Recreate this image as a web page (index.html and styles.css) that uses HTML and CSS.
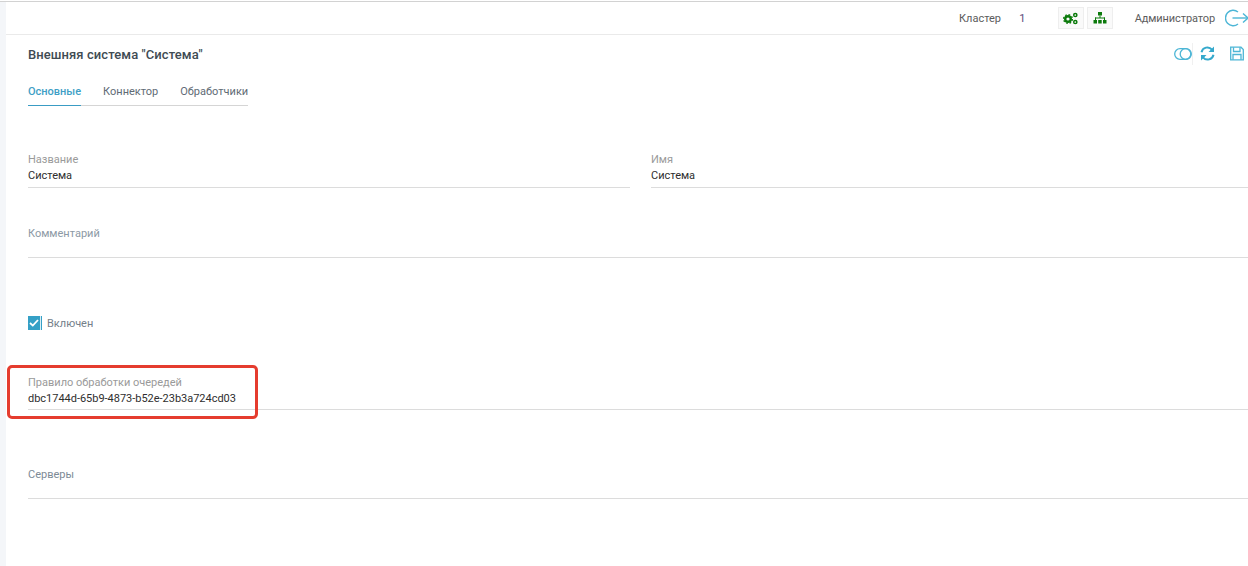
FILE: index.html
```html
<!DOCTYPE html>
<html lang="ru">
<head>
<meta charset="utf-8">
<title>Внешняя система</title>
<link rel="stylesheet" href="styles.css">
</head>
<body>
<div class="app">
  <aside class="rail"></aside>
  <div class="main">
    <header class="topbar">
      <span class="cluster-label">Кластер</span>
      <span class="cluster-value">1</span>
      <div class="tool-buttons">
        <button class="tool-btn" type="button" aria-label="Настройки">
          <svg width="15" height="13" viewBox="0 0 15 13"><g fill="none" stroke="#0b7a0b"><circle cx="5" cy="7" r="2.8" stroke-width="2.4"/><circle cx="5" cy="7" r="4.4" stroke-width="1.3" stroke-dasharray="1.7 1.75"/></g><g fill="none" stroke="#0b7a0b" stroke-width="1.5"><circle cx="12.3" cy="3" r="1.6"/><circle cx="12.3" cy="10" r="1.6"/></g></svg>
        </button>
        <button class="tool-btn" type="button" aria-label="Структура">
          <svg width="14" height="12" viewBox="0 0 14 12"><g fill="#0b7a0b"><rect x="5" y="0" width="4" height="3.5"/><rect x="6.5" y="3.5" width="1" height="2.5"/><rect x="2" y="5.5" width="10" height="1"/><rect x="2" y="5.5" width="1" height="2.5"/><rect x="11" y="5.5" width="1" height="2.5"/><rect x="0.5" y="8" width="3.5" height="3.5"/><rect x="5.2" y="8" width="3.5" height="3.5"/><rect x="10" y="8" width="3.5" height="3.5"/></g></svg>
        </button>
      </div>
      <span class="user">Администратор</span>
      <svg class="logout" width="23" height="18" viewBox="0 0 23 18"><g fill="none" stroke="#4db6d6" stroke-width="1.4"><path d="M13 3A7.7 7.7 0 1 0 13 15"/><path d="M7.5 9H23"/><path d="M18 4.5L23 9L18 13.5"/></g></svg>
    </header>
    <section class="content">
      <div class="title-row">
        <h1 class="title">Внешняя система "Система"</h1>
        <div class="actions">
          <svg class="toggle" width="18" height="12" viewBox="0 0 18 12"><g fill="none" stroke="#4db6d6" stroke-width="1.3"><rect x="0.7" y="0.7" width="16.6" height="10.6" rx="5.3"/><circle cx="11.5" cy="6" r="5.3"/></g></svg>
          <span class="divider"></span>
          <svg class="refresh" width="15" height="15" viewBox="0 0 15 15"><g fill="none" stroke="#35a9cc" stroke-width="2"><path d="M1.5 6.2A6 6 0 0 1 12 3.6"/><path d="M13.5 8.8A6 6 0 0 1 3 11.4"/></g><path fill="#35a9cc" d="M14 0.5V6H8.5zM1 14.5V9H6.5z"/></svg>
          <svg class="save" width="14" height="15" viewBox="0 0 14 15"><g fill="none" stroke="#4db6d6" stroke-width="1.3"><path d="M0.7 1.2H11L13.3 3.5V13.8H0.7z"/><path d="M3.5 1.2V5.5H10V1.2"/><path d="M3 13.8V8.5H11V13.8"/></g></svg>
        </div>
      </div>
      <nav class="tabs">
        <a class="tab tab-active">Основные</a>
        <a class="tab">Коннектор</a>
        <a class="tab">Обработчики</a>
      </nav>
      <div class="form">
        <div class="row-two">
          <div class="field field-top">
            <label class="field-label">Название</label>
            <div class="field-value">Система</div>
          </div>
          <div class="field field-top">
            <label class="field-label">Имя</label>
            <div class="field-value">Система</div>
          </div>
        </div>
        <div class="field field-comment">
          <label class="field-label">Комментарий</label>
          <div class="field-value"></div>
        </div>
        <label class="check">
          <span class="check-box"><svg width="10" height="8" viewBox="0 0 10 8"><path d="M1 4L3.8 6.6L9 1" fill="none" stroke="#fff" stroke-width="1.8"/></svg></span>
          <span class="check-text">Включен</span>
        </label>
        <div class="field field-rule">
          <label class="field-label">Правило обработки очередей</label>
          <div class="field-value">dbc1744d-65b9-4873-b52e-23b3a724cd03</div>
        </div>
        <div class="field field-servers">
          <label class="field-label">Серверы</label>
          <div class="field-value"></div>
        </div>
      </div>
    </section>
  </div>
</div>
<div class="highlight"></div>
</body>
</html>
```
FILE: styles.css
```css
* { box-sizing: border-box; }
html, body { margin: 0; height: 100%; overflow: hidden; background: #fff; }
body { font-family: Roboto, "Liberation Sans", sans-serif; font-size: 11px; color: #2e2e2e; }
.app { display: flex; height: 565px; border-top: 1px solid #d2d2d2; margin-top: 1px; }
.rail { width: 6px; flex: none; background: #f4f6f9; }
.main { flex: 1; min-width: 0; overflow: hidden; }
.topbar { height: 33px; border-bottom: 1px solid #eaeaea; display: flex; align-items: center; white-space: nowrap; }
.cluster-label { margin-left: 953px; color: #5c5c5c; width: 61px; }
.cluster-value { color: #5b4a7a; width: 39px; }
.tool-buttons { display: flex; gap: 3px; }
.tool-btn { width: 26px; height: 22px; padding: 0; border: 1px solid #eee; background: #fafafa; display: flex; align-items: center; justify-content: center; }
.user { margin-left: 22px; color: #5c5c5c; letter-spacing: -0.1px; }
.logout { margin-left: 10px; flex: none; }
.content { padding: 0 0 0 22px; }
.title-row { display: flex; justify-content: space-between; align-items: center; height: 38px; }
.title { margin: 0; font-size: 13px; font-weight: 500; color: #404b53; letter-spacing: 0.08px; }
.actions { display: flex; align-items: center; width: 74px; flex: none; height: 22px; margin-top: -1px; }
.toggle { flex: none; }
.divider { flex: none; width: 1px; height: 22px; background: #f0f0f0; }
.refresh { flex: none; margin-left: 7px; }
.save { flex: none; margin-left: 15px; }
.tabs { display: inline-flex; gap: 22px; border-bottom: 1px solid #d5d5d5; height: 33px; align-items: flex-start; padding-top: 12px; }
.tab { color: #5f6b75; height: 21px; line-height: 14px; }
.tab-active { color: #3f9fc6; font-weight: 500; border-bottom: 1px solid #3a9cc4; }
.form { margin-top: 46px; }
.row-two { display: grid; grid-template-columns: 602px 1fr; column-gap: 21px; }
.field { border-bottom: 1px solid #dcdcdc; }
.field-top { height: 36px; }
.field-label { display: block; color: #9a9a9a; line-height: 16px; }
.field-value { color: #2e2e2e; line-height: 16px; min-height: 16px; }
.field-comment { margin-top: 38px; height: 32px; }
.field-comment .field-label { color: #8c99a5; }
.check { display: flex; align-items: center; gap: 5px; margin-top: 57px; height: 16px; }
.check-box { width: 14px; height: 14px; background: linear-gradient(to right, #35a0c6 12px, #d8edf5 12px, #d8edf5 13px, #35a0c6 13px); display: flex; align-items: center; padding-left: 1px; }
.check-text { color: #74808a; }
.field-rule { margin-top: 44px; height: 35px; }
.field-rule .field-value { letter-spacing: -0.02px; }
.field-servers { margin-top: 57px; height: 32px; }
.field-servers .field-label { color: #7d8a96; }
.highlight { position: absolute; left: 7px; top: 365px; width: 251px; height: 54px; border: 3px solid #e53c2e; border-radius: 5px; }
```
